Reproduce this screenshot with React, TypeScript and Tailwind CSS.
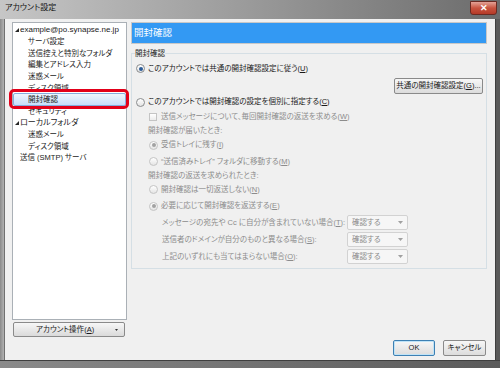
import React from "react";

const font = "font-['Liberation_Sans','Noto_Sans_CJK_JP',sans-serif] [font-feature-settings:'palt']";

const Radio = ({ checked, disabled }: { checked?: boolean; disabled?: boolean }) => (
    <span
        className={`flex h-[9px] w-[9px] shrink-0 items-center justify-center rounded-full border bg-linear-to-b from-white to-[#e4e4e4] ${
            disabled ? "border-[#c4c4c4]" : "border-[#8a8c8e]"
        }`}
    >
        {checked && (
            <span className={`h-[4px] w-[4px] rounded-full ${disabled ? "bg-[#a2a2a2]" : "bg-[#2c5c98]"}`} />
        )}
    </span>
);

const Key = ({ k }: { k: string }) => (
    <>
        (<span className="underline">{k}</span>)
    </>
);

const Select = () => (
    <div className="flex h-[15px] w-[61px] shrink-0 items-center justify-between rounded-[2px] border border-[#d2d2d2] bg-[#f6f6f6] pl-[4px] pr-[4px] text-[#8c8c8c]">
        <span>確認する</span>
        <svg width="5" height="3" viewBox="0 0 5 3">
            <path d="M0 0h5L2.5 3z" fill="#a0a0a0" />
        </svg>
    </div>
);

const Arrow = () => (
    <svg width="4" height="4" viewBox="0 0 4 4" className="shrink-0">
        <path d="M4 0v4H0z" fill="#262626" />
    </svg>
);

const treeItems: { label: React.ReactNode; root?: boolean; flat?: boolean; selected?: boolean }[] = [
    { label: "example@po.synapse.ne.jp", root: true },
    { label: "サーバ設定" },
    { label: "送信控えと特別なフォルダ" },
    { label: "編集とアドレス入力" },
    { label: "迷惑メール" },
    { label: "ディスク領域" },
    { label: "開封確認", selected: true },
    { label: "セキュリティ" },
    { label: "ローカルフォルダ", root: true },
    { label: "迷惑メール" },
    { label: "ディスク領域" },
    { label: "送信 (SMTP) サーバ", flat: true },
];

const Button = ({ children, primary, className = "" }: { children: React.ReactNode; primary?: boolean; className?: string }) => (
    <button
        className={`flex h-[16px] items-center justify-center whitespace-nowrap rounded-[2px] border bg-linear-to-b from-[#f7f7f7] to-[#dcdcdc] text-[#1a1a1a] ${
            primary ? "border-[#3d80b3] shadow-[inset_0_0_0_1px_#bfe3f7]" : "border-[#8a8a8a]"
        } ${className}`}
    >
        {children}
    </button>
);

export default function App() {
    return (
        <div className={`flex h-[368px] w-[500px] flex-col whitespace-nowrap text-[7.5px] leading-none ${font}`}>
            {/* title bar */}
            <div className="flex h-[19px] shrink-0 items-start justify-between bg-linear-to-r from-[#c6c6c6] via-[#9a9a9a] to-[#6c6c6c]">
                <span className="pl-[5px] pt-[4px] text-[8px] text-[#141414]">アカウント設定</span>
                <div className="mr-[3px] mt-[1px] flex h-[14px] w-[27px] items-center justify-center rounded-b-[3px] border border-[#6b2a22] bg-linear-to-b from-[#e3a297] via-[#c8533f] to-[#b53a28] text-[9px] font-bold text-white">
                    ✕
                </div>
            </div>

            <div className="flex min-h-0 flex-1">
                <div className="w-[5px] shrink-0 border-r border-[#707070] bg-linear-to-r from-[#8a8a8a] to-[#b2b2b2]" />

                {/* client area */}
                <div className="flex min-w-0 flex-1 gap-[4px] bg-[#f0f0f0] pb-[4px] pl-[7px] pr-[8px] pt-[3px]">
                    {/* left column */}
                    <div className="flex w-[115px] shrink-0 flex-col">
                        <div className="flex h-[298px] flex-col border border-[#aab0b6] bg-white pt-[1.5px] text-[#1a1a1a]">
                            {treeItems.map((item, i) =>
                                item.selected ? (
                                    <div
                                        key={i}
                                        className="relative -my-[0.7px] flex h-[13px] items-center rounded-[2px] border border-[#84acdd] bg-linear-to-b from-[#eef5fd] to-[#c8defb] pl-[14px]"
                                    >
                                        {item.label}
                                        <div className="absolute -bottom-[4px] -left-[5px] -right-[4px] -top-[5px] rounded-[5px] border-[3px] border-[#e2001a]" />
                                    </div>
                                ) : (
                                    <div
                                        key={i}
                                        className={`flex h-[11.6px] items-center ${
                                            item.root ? "gap-[1px] pl-[2px]" : item.flat ? "pl-[7px]" : "pl-[15px]"
                                        } ${item.root ? "text-[8px]" : ""}`}
                                    >
                                        {item.root && <Arrow />}
                                        <span>{item.label}</span>
                                    </div>
                                )
                            )}
                        </div>
                        <button className="ml-[1px] mt-[2px] flex h-[15px] w-[112px] items-center justify-between rounded-[2px] border border-[#8a8a8a] bg-linear-to-b from-[#f7f7f7] to-[#dadada] pl-[22px] pr-[6px] text-[#1a1a1a]">
                            <span>
                                アカウント操作<Key k="A" />
                            </span>
                            <svg width="3" height="2" viewBox="0 0 3 2">
                                <path d="M0 0h3L1.5 2z" fill="#333" />
                            </svg>
                        </button>
                    </div>

                    {/* right column */}
                    <div className="flex min-w-0 flex-1 flex-col">
                        <div className="flex h-[22px] shrink-0 items-center border border-[#c8c8c8] bg-[#3399f3] pl-[2px] text-[9.5px] text-white">
                            開封確認
                        </div>

                        <fieldset className="mt-[4px] border border-[#d5dfe5] px-0 pb-[3px] text-[#1a1a1a]">
                            <legend className="ml-[3px] h-[11px] leading-[11px] text-[#1a1a1a]">開封確認</legend>

                            <div className="flex h-[19px] items-center gap-[3px] pl-[4px]">
                                <Radio checked />
                                <span>
                                    このアカウントでは共通の開封確認設定に従う<Key k="U" />
                                </span>
                            </div>
                            <div className="flex h-[16px] justify-end pr-[3px]">
                                <Button className="w-[89px]">
                                    共通の開封確認設定<Key k="G" />...
                                </Button>
                            </div>
                            <div className="flex h-[16px] items-center gap-[3px] pl-[4px]">
                                <Radio />
                                <span>
                                    このアカウントでは開封確認の設定を個別に指定する<Key k="C" />
                                </span>
                            </div>

                            <div className="text-[#8c8c8c]">
                                <div className="flex h-[14px] items-center gap-[4px] pl-[17px]">
                                    <span className="h-[8px] w-[8px] shrink-0 border border-[#c4c4c4] bg-linear-to-b from-white to-[#ececec]" />
                                    <span>
                                        送信メッセージについて、毎回開封確認の返送を求める<Key k="W" />
                                    </span>
                                </div>
                                <div className="flex h-[14px] items-center pl-[16px]">開封確認が届いたとき:</div>
                                <div className="flex h-[14px] items-center gap-[3px] pl-[17px]">
                                    <Radio checked disabled />
                                    <span>
                                        受信トレイに残す<Key k="I" />
                                    </span>
                                </div>
                                <div className="flex h-[19px] items-center gap-[3px] pl-[17px]">
                                    <Radio disabled />
                                    <span>
                                        “送信済みトレイ” フォルダに移動する<Key k="M" />
                                    </span>
                                </div>
                                <div className="flex h-[10px] items-center pl-[16px]">開封確認の返送を求められたとき:</div>
                                <div className="flex h-[17px] items-center gap-[3px] pl-[17px]">
                                    <Radio disabled />
                                    <span>
                                        開封確認は一切返送しない<Key k="N" />
                                    </span>
                                </div>
                                <div className="flex h-[16px] items-center gap-[3px] pl-[17px]">
                                    <Radio checked disabled />
                                    <span>
                                        必要に応じて開封確認を返送する<Key k="E" />
                                    </span>
                                </div>

                                <div className="flex h-[17px] items-center pl-[30px]">
                                    <span className="w-[185px] shrink-0">
                                        メッセージの宛先や Cc に自分が含まれていない場合<Key k="T" />:
                                    </span>
                                    <Select />
                                </div>
                                <div className="flex h-[17px] items-center pl-[30px]">
                                    <span className="w-[185px] shrink-0">
                                        送信者のドメインが自分のものと異なる場合<Key k="S" />:
                                    </span>
                                    <Select />
                                </div>
                                <div className="flex h-[17px] items-center pl-[30px]">
                                    <span className="w-[185px] shrink-0">
                                        上記のいずれにも当てはまらない場合<Key k="O" />:
                                    </span>
                                    <Select />
                                </div>
                            </div>
                        </fieldset>

                        <div className="flex-1" />

                        <div className="flex justify-end gap-[8px] pr-[1px]">
                            <Button primary className="w-[42px]">
                                OK
                            </Button>
                            <Button className="w-[43px]">キャンセル</Button>
                        </div>
                    </div>
                </div>

                <div className="w-[5px] shrink-0 border-l border-[#3e3e3e] bg-[#5a5a5a]" />
            </div>

            {/* bottom frame */}
            <div className="h-[8px] shrink-0 border-t border-[#3e3e3e] bg-linear-to-r from-[#8a8a8a] to-[#5a5a5a]" />
        </div>
    );
}
